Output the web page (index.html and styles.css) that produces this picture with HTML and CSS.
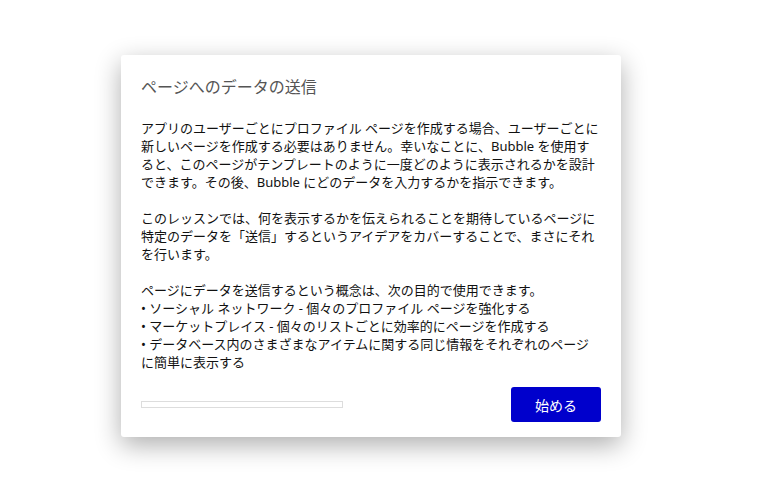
FILE: index.html
```html
<!DOCTYPE html>
<html lang="ja">
<head>
  <meta charset="UTF-8">
  <title>ページへのデータの送信</title>
  <link rel="stylesheet" href="styles.css">
</head>
<body>
  <div class="tarjeta">
    <h2 class="titulo">ページへのデータの送信</h2>
    <p class="texto">アプリのユーザーごとにプロファイル ページを作成する場合、ユーザーごとに新しいページを作成する必要はありません。幸いなことに、Bubble を使用すると、このページがテンプレートのように一度どのように表示されるかを設計できます。その後、Bubble にどのデータを入力するかを指示できます。<br><br>このレッスンでは、何を表示するかを伝えられることを期待しているページに特定のデータを「送信」するというアイデアをカバーすることで、まさにそれを行います。<br><br>ページにデータを送信するという概念は、次の目的で使用できます。<br>• ソーシャル ネットワーク - 個々のプロファイル ページを強化する<br>• マーケットプレイス - 個々のリストごとに効率的にページを作成する<br>• データベース内のさまざまなアイテムに関する同じ情報をそれぞれのページに簡単に表示する</p>
    <div class="rodape">
      <div class="barra"><div class="progresso"></div></div>
      <button class="botao">始める</button>
    </div>
  </div>
</body>
</html>
```

FILE: styles.css
```css
html, body {
  height: 100%;
}

body {
  font-family: "Noto Sans", "Noto Sans CJK JP", sans-serif;
  background-color: #ffffff;
  margin: 0;
  padding: 55px 0 0 121px;
  box-sizing: border-box;
}

.tarjeta {
  width: 500px;
  height: 382px;
  box-sizing: border-box;
  background-color: white;
  border-radius: 3px;
  box-shadow: 0 8px 26px rgba(0, 0, 0, 0.32);
  padding: 20px 20px 0 20px;
}

.titulo {
  margin: 0;
  font-size: 16px;
  font-weight: normal;
  line-height: 24px;
  color: #555555;
}

.texto {
  margin: 20px 0 0 0;
  font-size: 13px;
  line-height: 18px;
  color: #111111;
  height: 252px;
}

.rodape {
  display: flex;
  justify-content: space-between;
  align-items: center;
  margin-top: 16px;
}

.barra {
  width: 200px;
  height: 5px;
  border: 1px solid #dddddd;
}

.progresso {
  width: 0;
  height: 100%;
  background-color: #0000cc;
}

.botao {
  width: 90px;
  height: 35px;
  border: none;
  border-radius: 3px;
  background-color: #0000cc;
  color: white;
  font-family: "Noto Sans", "Noto Sans CJK JP", sans-serif;
  font-size: 14px;
  cursor: pointer;
}
```
